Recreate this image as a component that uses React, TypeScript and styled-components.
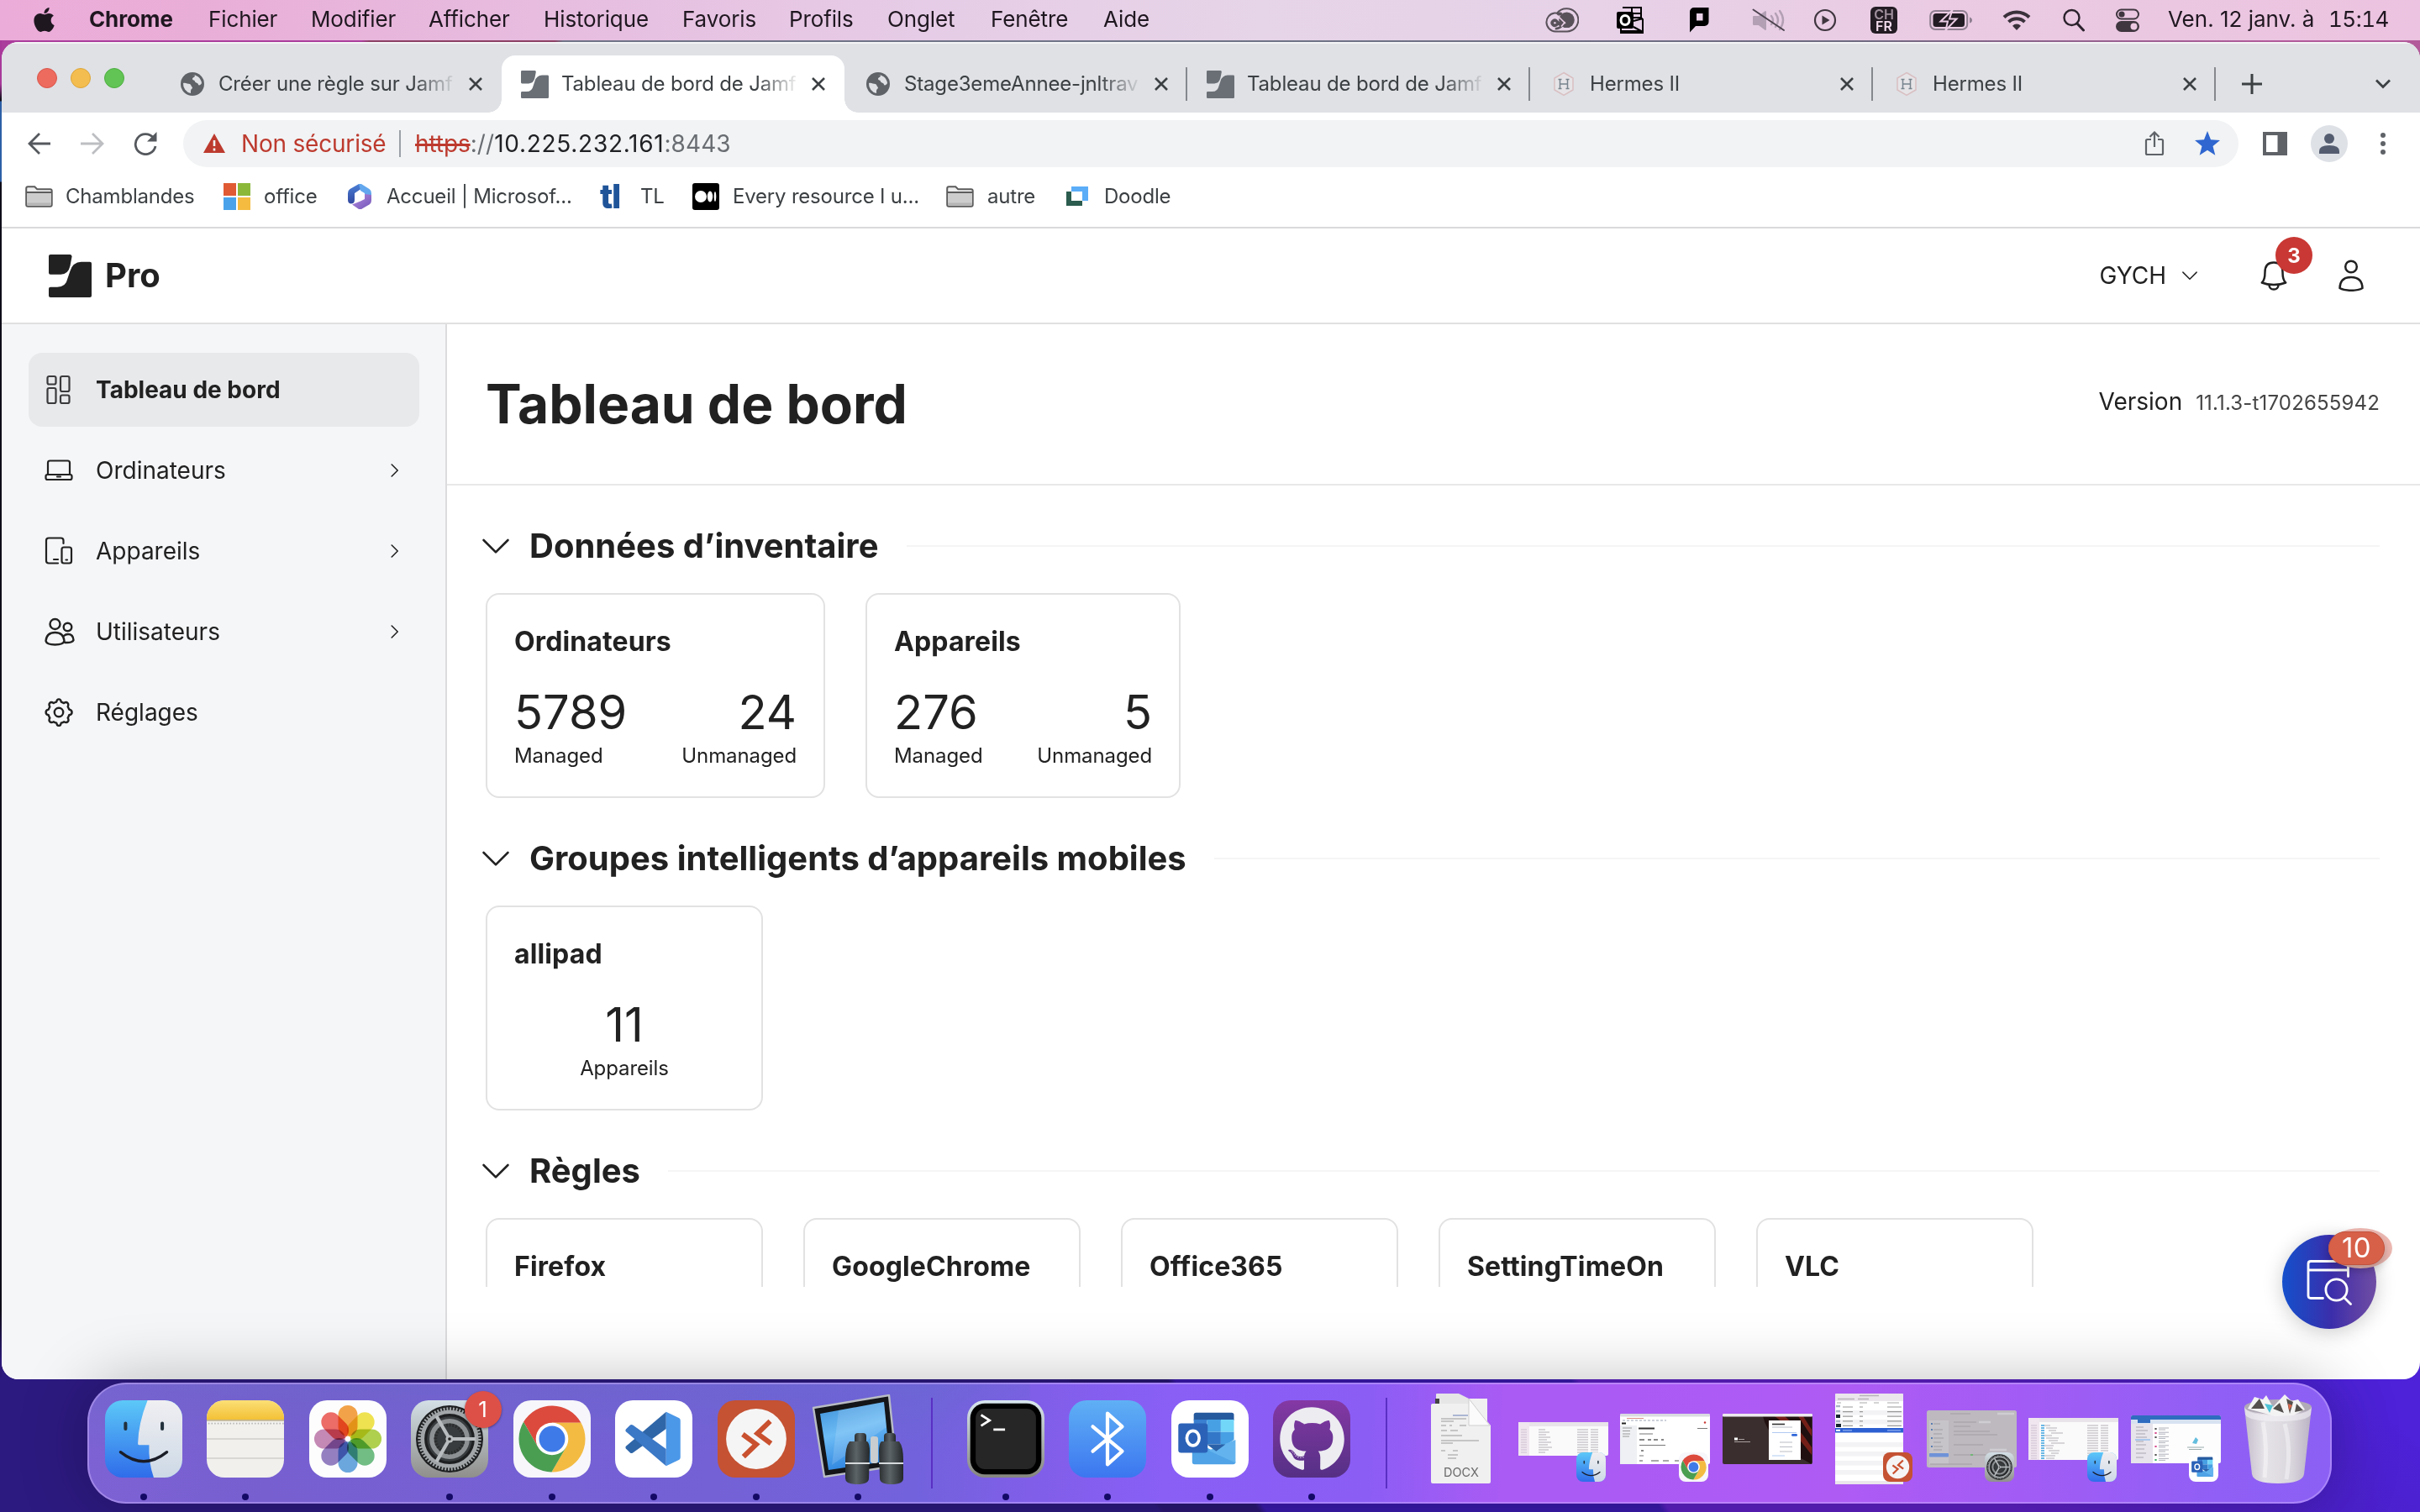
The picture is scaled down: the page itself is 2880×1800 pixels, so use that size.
import React from "react";
import styled, { createGlobalStyle, css } from "styled-components";
import { FaApple, FaGithub } from "react-icons/fa";

const GlobalStyle = createGlobalStyle`
  *, *::before, *::after { box-sizing: border-box; }
  body { margin: 0; background: #24125e; }
  svg { display: block; flex: none; }
`;

const Desktop = styled.div`
  width: 2880px;
  height: 1800px;
  overflow: hidden;
  display: flex;
  flex-direction: column;
  font-family: Inter, "Liberation Sans", sans-serif;
  color: #212121;
  background:
    linear-gradient(180deg, #a8399a 0 100px, #14101c 118px, #14101c 120px, #2c5fa6 121px 216px, #0e0c18 217px 1560px, #2b1778 1620px) 0 0 / 2px 1640px no-repeat,
    linear-gradient(90deg, #ab3d9c 0 430px, #8c3f63 440px 660px, #6f7386 670px 1540px, #6d6a80 2200px, #b25a9a 2700px 2880px) 0 0 / 100% 80px no-repeat,
    linear-gradient(220deg, #4d22d8 0 90px, transparent 260px) 100% 100% / 400px 200px no-repeat,
    linear-gradient(55deg, #2d1a80 0 46%, #2a1774 46.2% 50%, #3a1aae 50.3% 66%, #5d1fc4 66.3% 80%, #4a1fc4 92%) 0 100% / 100% 170px no-repeat,
    #2a1774;
`;

/* ---------- macOS menu bar ---------- */

const MenuBar = styled.header`
  flex: none;
  height: 48px;
  display: flex;
  align-items: center;
  justify-content: space-between;
  font-size: 26px;
  line-height: 32px;
  color: #1f1720;
  background: linear-gradient(90deg, #ecacd9 0, #e9aed8 8%, #e7bcdf 22%, #e6cce6 38%, #e6d4e8 52%, #e7d2e8 66%, #eacbe3 80%, #ecc3e0 100%);
`;

const MenuList = styled.nav`
  display: flex;
  align-items: center;
  padding: 0 0 2px 36px;
  letter-spacing: -0.12px;
`;

const AppleSlot = styled.span`
  width: 70px;
`;

const MenuItem = styled.span<{ $pitch: number; $bold?: boolean }>`
  width: ${(p) => p.$pitch}px;
  white-space: nowrap;
  font-weight: ${(p) => (p.$bold ? 700 : 400)};
`;

const StatusArea = styled.div`
  display: flex;
  align-items: center;
  width: 1060px;
`;

const StatusSlot = styled.span<{ $w: number }>`
  width: ${(p) => p.$w}px;
  display: flex;
  justify-content: center;
`;

const Clock = styled.span`
  display: flex;
  width: 300px;
  padding: 0 0 2px 9px;
  white-space: nowrap;
`;

const ClockDate = styled.span`
  width: 191px;
`;

const ClockTime = styled.span`
  font-variant-numeric: tabular-nums;
  letter-spacing: -0.5px;
`;

const InputSource = styled.span`
  width: 32px;
  height: 32px;
  border-radius: 6px;
  background: #231c24;
  display: flex;
  flex-direction: column;
  align-items: center;
  justify-content: center;
  font-size: 16px;
  line-height: 14px;
  font-weight: 600;
  color: #f2dcee;
`;

const InputCountry = styled.span`
  opacity: 0.6;
`;

/* ---------- browser window ---------- */

const BrowserWindow = styled.main`
  position: relative;
  flex: none;
  margin: 2px 0 0 2px;
  height: 1592px;
  border-radius: 20px;
  overflow: hidden;
  background: #fff;
  display: flex;
  flex-direction: column;
`;

const TabStrip = styled.div`
  flex: none;
  height: 84px;
  display: flex;
  align-items: flex-end;
  background: #dfe1e5;
  border-top: 2px solid #f4f4f6;
`;

const TrafficLights = styled.div`
  width: 187px;
  height: 82px;
  display: flex;
  gap: 16px;
  padding: 29px 0 0 42px;
`;

const Light = styled.span<{ $fill: string; $edge: string }>`
  width: 24px;
  height: 24px;
  border-radius: 50%;
  background: ${(p) => p.$fill};
  border: 1px solid ${(p) => p.$edge};
`;

const activeTab = css`
  background: #fff;
  &::before,
  &::after {
    content: "";
    position: absolute;
    bottom: 0;
    width: 16px;
    height: 16px;
  }
  &::before {
    left: -16px;
    background: radial-gradient(circle at 0 0, transparent 15.5px, #fff 16px);
  }
  &::after {
    right: -16px;
    background: radial-gradient(circle at 100% 0, transparent 15.5px, #fff 16px);
  }
`;

const Tab = styled.div<{ $active?: boolean; $divider?: boolean }>`
  position: relative;
  width: 408px;
  height: 68px;
  display: flex;
  align-items: center;
  padding: 0 22px;
  border-radius: 16px 16px 0 0;
  ${(p) => p.$active && activeTab}
  ${(p) =>
    p.$divider &&
    css`
      background: linear-gradient(#85888d, #85888d) 100% 50% / 2px 40px no-repeat;
    `}
`;

const TabIcon = styled.span`
  width: 35px;
  margin-right: 14px;
  display: flex;
  justify-content: center;
`;

const TabTitle = styled.span`
  width: 284px;
  margin-right: 14px;
  overflow: hidden;
  white-space: nowrap;
  font-size: 24px;
  line-height: 32px;
  letter-spacing: -0.17px;
  color: #3c4043;
  mask-image: linear-gradient(90deg, #000 232px, transparent 284px);
`;

const NewTab = styled.div`
  flex: 1;
  height: 68px;
  display: flex;
  align-items: center;
  justify-content: space-between;
  padding: 0 35px 0 31px;
`;

const Toolbar = styled.div`
  flex: none;
  height: 70px;
  margin-top: 2px;
  display: flex;
  align-items: center;
  padding-left: 27px;
  padding-bottom: 1px;
`;

const NavButtons = styled.div`
  width: 189px;
  display: flex;
  align-items: center;
  gap: 32px;
`;

const Omnibox = styled.div`
  width: 2446px;
  height: 56px;
  border-radius: 28px;
  background: #f1f3f4;
  display: flex;
  align-items: center;
  padding: 0 22px 0 24px;
  font-size: 28px;
  line-height: 36px;
`;

const Insecure = styled.span`
  width: 188px;
  margin-left: 19px;
  color: #bd3a2e;
  letter-spacing: -0.2px;
`;

const OmniDivider = styled.span`
  width: 2px;
  height: 32px;
  margin-right: 17px;
  background: #9aa0a6;
`;

const Address = styled.span`
  flex: 1;
  color: #6a6e73;
  letter-spacing: 0.1px;
`;

const Scheme = styled.span`
  color: #bd3a2e;
  letter-spacing: -0.1px;
  text-decoration: line-through;
  text-decoration-thickness: 3px;
`;

const Host = styled.span`
  color: #202124;
  letter-spacing: 0.72px;
`;

const OmniActions = styled.span`
  display: flex;
  align-items: center;
  gap: 36px;
`;

const ToolbarActions = styled.div`
  display: flex;
  align-items: center;
  padding-left: 29px;
  gap: 28px;
`;

const Avatar = styled.span`
  width: 44px;
  height: 44px;
  border-radius: 50%;
  background: #dee1e6;
  display: flex;
  align-items: center;
  justify-content: center;
`;

const Dots = styled.span`
  display: flex;
  flex-direction: column;
  gap: 4px;
  margin-left: 11px;
  & > i {
    width: 6px;
    height: 6px;
    border-radius: 50%;
    background: #5f6368;
  }
`;

const BookmarkBar = styled.div`
  flex: none;
  height: 66px;
  display: flex;
  align-items: center;
  padding: 0 28px 8px;
  border-bottom: 2px solid #dadadc;
`;

const Bookmark = styled.span<{ $w: number; $icon: number }>`
  width: ${(p) => p.$w}px;
  display: grid;
  grid-template-columns: ${(p) => p.$icon}px 1fr;
  align-items: center;
  font-size: 24px;
  line-height: 32px;
  letter-spacing: -0.2px;
  white-space: nowrap;
  color: #3c4043;
`;

const TlMark = styled.b`
  font-size: 40px;
  line-height: 32px;
  font-weight: 800;
  letter-spacing: -1.5px;
  color: #1f5499;
`;

/* ---------- Jamf Pro page ---------- */

const AppHeader = styled.div`
  flex: none;
  height: 114px;
  display: flex;
  align-items: center;
  padding: 0 67px 0 56px;
  border-bottom: 2px solid #e0e0e0;
`;

const Brand = styled.div`
  flex: 1;
  display: flex;
  align-items: center;
  gap: 16px;
  font-size: 40px;
  line-height: 48px;
  font-weight: 700;
`;

const SiteMenu = styled.div`
  display: flex;
  align-items: center;
  gap: 19px;
  font-size: 28px;
  line-height: 36px;
  margin-right: 75px;
`;

const BellButton = styled.div`
  position: relative;
  margin-right: 61px;
`;

const AlertBadge = styled.span`
  position: absolute;
  left: 18px;
  top: -28px;
  width: 44px;
  height: 44px;
  border-radius: 50%;
  background: #c93834;
  color: #fff;
  font-size: 24px;
  line-height: 46px;
  font-weight: 700;
  text-align: center;
`;

const AppBody = styled.div`
  flex: 1;
  min-height: 0;
  display: flex;
`;

const Sidebar = styled.aside`
  width: 530px;
  flex: none;
  padding: 34px 31px 0 32px;
  display: flex;
  flex-direction: column;
  gap: 8px;
  background: #f5f6f8;
  border-right: 2px solid #dcdcde;
`;

const NavItem = styled.div<{ $active?: boolean }>`
  height: 88px;
  border-radius: 16px;
  display: flex;
  align-items: center;
  padding: 0 24px 0 19px;
  font-size: 28px;
  line-height: 36px;
  font-weight: ${(p) => (p.$active ? 700 : 400)};
  background: ${(p) => (p.$active ? "#e8e9eb" : "transparent")};
`;

const NavIcon = styled.span`
  width: 61px;
`;

const NavLabel = styled.span`
  flex: 1;
`;

const Page = styled.section`
  flex: 1;
  min-width: 0;
  display: flex;
  flex-direction: column;
`;

const PageHeader = styled.div`
  flex: none;
  height: 192px;
  display: flex;
  align-items: center;
  justify-content: space-between;
  padding: 0 48px 0 46px;
  border-bottom: 2px solid #e8e8e8;
`;

const PageTitle = styled.h1`
  margin: 0;
  font-size: 64px;
  line-height: 80px;
  font-weight: 700;
`;

const Version = styled.div`
  display: flex;
  align-items: baseline;
  gap: 16px;
  padding-bottom: 4px;
  font-size: 28px;
  line-height: 36px;
`;

const VersionNumber = styled.span`
  font-size: 24px;
  letter-spacing: 0.16px;
  color: #454545;
`;

const Sections = styled.div`
  height: 954px;
  overflow: hidden;
  padding: 16px 48px 0 46px;
  display: flex;
  flex-direction: column;
  gap: 16px;
`;

const Section = styled.section`
  flex: none;
`;

const SectionHeader = styled.div`
  height: 112px;
  display: flex;
  align-items: center;
  margin-left: -4px;
`;

const SectionTitle = styled.h2`
  margin: 0 33px 0 24px;
  font-size: 40px;
  line-height: 48px;
  font-weight: 700;
  white-space: nowrap;
`;

const Rule = styled.span`
  flex: 1;
  height: 2px;
  background: #f5f5f5;
`;

const CardRow = styled.div`
  display: flex;
  gap: 48px;
`;

const Card = styled.article<{ $w: number }>`
  flex: none;
  width: ${(p) => p.$w}px;
  height: 244px;
  padding: 36px 32px 0;
  border: 2px solid #e2e2e2;
  border-radius: 16px;
`;

const CardTitle = styled.h3`
  margin: 0 0 32px;
  font-size: 32px;
  line-height: 40px;
  font-weight: 700;
  letter-spacing: 0.12px;
`;

const Stats = styled.div<{ $single?: boolean }>`
  display: flex;
  justify-content: ${(p) => (p.$single ? "center" : "space-between")};
`;

const Stat = styled.div<{ $align: "left" | "right" | "center" }>`
  text-align: ${(p) => p.$align};
`;

const StatValue = styled.div`
  font-size: 56px;
  line-height: 64px;
  margin-bottom: 4px;
`;

const StatLabel = styled.div`
  font-size: 24px;
  line-height: 32px;
  letter-spacing: -0.1px;
`;

const Fab = styled.div`
  position: absolute;
  left: 2714px;
  top: 1420px;
  width: 112px;
  height: 112px;
  border-radius: 50%;
  background: linear-gradient(90deg, #1550cc 0, #2b3cb8 32%, #3b2eab 52%, #5a3ea6 78%, #6f4ea4 100%);
  box-shadow: 0 4px 24px rgba(0, 0, 0, 0.2);
`;

const FabIcon = styled.span`
  position: absolute;
  left: 28px;
  top: 28px;
`;

const FabHalo = styled.span`
  position: absolute;
  left: 55px;
  top: -8px;
  width: 76px;
  height: 48px;
  border-radius: 50%;
  background: #eeb9b2;
`;

const FabBadge = styled.span`
  position: absolute;
  left: 55px;
  top: -4px;
  width: 67px;
  height: 40px;
  border-radius: 20px;
  border: 1px solid #c2523c;
  background: #d76049;
  color: #fff;
  font-size: 33px;
  line-height: 37px;
  letter-spacing: 0.5px;
  text-align: center;
  box-shadow: 0 5px 12px rgba(0, 0, 0, 0.25);
`;

/* ---------- dock ---------- */

const Dock = styled.footer`
  position: relative;
  flex: none;
  margin: 4px 105px 0 104px;
  height: 144px;
  border-radius: 46px;
  border: 2px solid rgba(206, 180, 255, 0.45);
  padding: 0 0 0 4px;
  display: flex;
  background:
    linear-gradient(180deg, rgba(90, 110, 190, 0.22), rgba(120, 90, 230, 0) 60%) 0 0 / 42% 100% no-repeat,
    linear-gradient(92deg, #7d62d4 0, #775fd0 8%, #7461d6 28%, #7262dc 37%, #805ee8 42%, #895ff6 48%, #8b5df5 57%, #a95bf4 63%, #ae5bf4 78%, #a25cf5 86%, #905ff5 95%, #8c60f4 100%);
  background-origin: border-box;
  box-shadow: 0 0 80px rgba(0, 0, 0, 0.27);
`;

const DockSlot = styled.div`
  position: relative;
  flex: none;
  width: 121.5px;
  display: flex;
  flex-direction: column;
  align-items: center;
  padding-top: 19px;
`;

const RunningDot = styled.i`
  width: 8px;
  height: 8px;
  border-radius: 50%;
  margin-top: 19px;
  background: #140a66;
`;

const DockDivider = styled.span<{ $w: number }>`
  flex: none;
  width: ${(p) => p.$w}px;
  display: flex;
  justify-content: center;
  padding-top: 16px;
  &::before {
    content: "";
    width: 2px;
    height: 108px;
    background: #5a2fc4;
  }
`;

const DockBadge = styled.span`
  position: absolute;
  left: 78px;
  top: 8px;
  width: 44px;
  height: 44px;
  border-radius: 50%;
  background: #dd5048;
  color: #fff;
  font-size: 26px;
  line-height: 44px;
  text-align: center;
  box-shadow: 0 1px 3px rgba(0, 0, 0, 0.4);
`;

const WindowSlot = styled.div`
  position: relative;
  flex: none;
  width: 121.5px;
  height: 130px;
  display: flex;
  align-items: center;
  justify-content: center;
`;

const MiniBadge = styled.span`
  position: absolute;
  right: 10px;
  top: 81px;
`;

const DocxLabel = styled.text`
  font-family: Inter, sans-serif;
  font-size: 14.5px;
  fill: #6b6b6b;
`;

/* ---------- menu bar drawings ---------- */

const CreativeCloud = () => (
  <svg width="40" height="30" viewBox="0 0 40 30" fill="none" stroke="#5a525b" strokeWidth="2">
    <path d="M25.500 1.200a13.300 13.300 0 0 1 .5 27.200H12a11 11 0 0 1-1-21.900q1.500-.1 3 .2A14 14 0 0 1 25.500 1.200z" />
    <path d="M20 19.500l-4.500-4.700a5 5 0 1 0-3.700 8.400q3 0 5.200-2.400l7-9q1.500-1.800 3.200-1" strokeWidth="0" />
    <circle cx="25.500" cy="14.800" r="9.300" fill="#5a525b" stroke="none" />
    <path d="M19.500 8q-2.500-1.500-5 .9M19.500 22l-6.500-6.200a3 3 0 1 0-.2 5q1.200-.6 2-1.500" strokeWidth="3.600" />
    <path d="M11.800 25.200q4.700 0 8.200-3.700" strokeWidth="2.600" />
    <path stroke="#e9cfe6" d="M14.500 9.500l9.500 9.500M19 22.500q2.500-2.500 4.500-5.500" strokeWidth="1.600" />
  </svg>
);

const OutlookMenu = () => (
  <svg width="32" height="32" viewBox="0 0 32 32">
    <path d="M7 1h22v13l2 1v16H5V20" fill="none" stroke="#000" strokeWidth="2" />
    <path d="M18 1v7h11M18 13h11M20 17l11-3M20 24l11 6M5 29h24" fill="none" stroke="#000" strokeWidth="2" />
    <rect x="0" y="6" width="20" height="20" rx="2" fill="#000" />
    <ellipse cx="10" cy="16" rx="5" ry="5.500" fill="none" stroke="#fff" strokeWidth="3" />
  </svg>
);

const PrintFlag = () => (
  <svg width="23" height="30" viewBox="0 0 23 30">
    <path fillRule="evenodd" d="M5 0h17.500v17a5 5 0 0 1-5 5H7L0 29.500V5a5 5 0 0 1 5-5zM8 7v8.500h7.500V7z" />
  </svg>
);

const MutedVolume = () => (
  <svg width="40" height="28" viewBox="0 0 40 28" fill="none">
    <path d="M2 10h6l8-6v21l-8-6H2z" fill="#b3a0b5" stroke="#b3a0b5" strokeWidth="2" strokeLinejoin="round" />
    <path d="M23 9q4 5 0 10M28 6q6 8 0 16M33 3q8 11 0 22" stroke="#b3a0b5" strokeWidth="2.400" strokeLinecap="round" />
    <path d="M1.500 1.500L38 26" stroke="#4c434e" strokeWidth="2" strokeLinecap="round" />
  </svg>
);

const PlayCircle = () => (
  <svg width="28" height="28" viewBox="0 0 28 28">
    <circle cx="14" cy="14" r="12" fill="none" stroke="#3f363f" strokeWidth="2.200" />
    <path d="M10.500 8.500v11l9-5.500z" fill="#3f363f" />
  </svg>
);

const Battery = () => (
  <svg width="52" height="26" viewBox="0 0 52 26">
    <rect x="1.200" y="2" width="44" height="22" rx="6" fill="none" stroke="#8f7f90" strokeWidth="2" />
    <rect x="4.500" y="5" width="37.500" height="16" rx="3.500" fill="#231c24" />
    <path d="M48 9.500q3 1 3 3.500t-3 3.500z" fill="#8f7f90" />
    <path d="M27.500 1L13.500 14.500h8.500L19.500 25l13-13.500h-8.500z" fill="#231c24" stroke="#ebcde5" strokeWidth="2" />
  </svg>
);

const WifiIcon = () => (
  <svg width="34" height="26" viewBox="0 0 34 26" fill="none" stroke="#3a313b" strokeWidth="4">
    <path d="M2 9.500a21.500 21.500 0 0 1 30 0" />
    <path d="M7.500 15.200a13.500 13.500 0 0 1 19 0" />
    <path d="M17 25l-5-5.300a7 7 0 0 1 10 0z" fill="#3a313b" stroke="none" />
  </svg>
);

const Spotlight = () => (
  <svg width="26" height="28" viewBox="0 0 26 28" fill="none" stroke="#2b222c" strokeLinecap="round">
    <circle cx="10.500" cy="11" r="9" strokeWidth="2.400" />
    <path d="M17 18l7.500 8" strokeWidth="3" />
  </svg>
);

const ControlCenter = () => (
  <svg width="28" height="28" viewBox="0 0 28 28">
    <rect x="1" y="1.500" width="26" height="11" rx="5.500" fill="none" stroke="#3f363f" strokeWidth="2" />
    <circle cx="7" cy="7" r="3.600" fill="#3f363f" />
    <rect x="0" y="15" width="28" height="13" rx="6.500" fill="#3f363f" />
    <circle cx="21.500" cy="21.500" r="4" fill="#ecc9e2" />
  </svg>
);

/* ---------- browser drawings ---------- */

const Globe = () => (
  <svg width="28" height="28" viewBox="0 0 28 28">
    <circle cx="14" cy="14" r="14" fill="#5f6368" />
    <path d="M3 13c3-1 5 1 8 1 2 1 1 3 3 4 0 2-2 2-2 4v3A11.500 11.500 0 0 1 3 13z" fill="#dfe1e5" />
    <path d="M12 3c2 0 4 0 5 1 0 2-3 2-3 4s3 1 3 3 4 1 4 4c1 1 3 0 4-2A11.500 11.500 0 0 0 12 3z" fill="#dfe1e5" />
  </svg>
);

const JamfMark = ({ size, fill }: { size: number; fill: string }) => (
  <svg width={size} height={size} viewBox="0 0 50 50" fill={fill}>
    <path d="M2 0h23q2 0 2 2.500L25 13q-2 10-11 10.300H2q-2 0-2-2V2q0-2 2-2z" />
    <path d="M48 8.500q2 0 2 2V48q0 2-2 2H2q-2 0-2-2v-8q0-2 2-2h8q10 0 12-10l3-9q3-10 13-10.500z" />
  </svg>
);

const HermesMark = () => (
  <svg width="26" height="30" viewBox="0 0 26 30">
    <path d="M13 1.500l11 6.500v14l-11 6.500L2 22V8z" fill="#e6e4e7" stroke="#d9bfc2" strokeWidth="1.500" />
    <path d="M8.500 9.500v11M17.500 9.500v11M8.500 15h9M6.500 9.500h4M15.500 9.500h4M6.500 20.500h4M15.500 20.500h4" stroke="#77838d" strokeWidth="1.500" />
  </svg>
);

const CloseIcon = () => (
  <svg width="16" height="16" viewBox="0 0 16 16" stroke="#3c4043" strokeWidth="2.600">
    <path d="M1 1l14 14M15 1L1 15" />
  </svg>
);

const PlusIcon = () => (
  <svg width="24" height="24" viewBox="0 0 24 24" stroke="#3c4043" strokeWidth="3">
    <path d="M12 0v24M0 12h24" />
  </svg>
);

const TabSearch = () => (
  <svg width="18" height="12" viewBox="0 0 18 12" fill="none" stroke="#3c4043" strokeWidth="2.800">
    <path d="M1 1.500l8 8 8-8" />
  </svg>
);

const ArrowIcon = ({ forward }: { forward?: boolean }) => (
  <svg width="32" height="28" viewBox="0 0 32 28" fill="none" stroke={forward ? "#bcbec1" : "#55595e"} strokeWidth="2.800">
    {forward ? <path d="M3 14h26M17 2l12 12-12 12" /> : <path d="M31 14H6M18 2L6 14l12 12" />}
  </svg>
);

const ReloadIcon = () => (
  <svg width="30" height="28" viewBox="0 0 30 28">
    <path d="M25.500 7A12 12 0 1 0 28 17" fill="none" stroke="#55595e" strokeWidth="2.800" />
    <path d="M29.500 0v11.500H18z" fill="#55595e" />
  </svg>
);

const WarnIcon = () => (
  <svg width="26" height="23" viewBox="0 0 26 23">
    <path d="M13 0l13 23H0z" fill="#bd3a2e" />
    <path d="M13 8v7M13 17.500v3" stroke="#f1f3f4" strokeWidth="2.600" />
  </svg>
);

const ShareIcon = () => (
  <svg width="24" height="30" viewBox="0 0 24 30" fill="none" stroke="#5f6368" strokeWidth="2.200">
    <path d="M8 10H3.500q-1.500 0-1.500 1.500v15Q2 28 3.500 28h17q1.500 0 1.500-1.500v-15q0-1.500-1.500-1.500H16M12 19V2.500M6.500 7L12 1.500 17.500 7" />
  </svg>
);

const StarIcon = () => (
  <svg width="30" height="29" viewBox="0 0 30 29" fill="#2f66d0">
    <path d="M15 0l4 10.200 11 .7-8.500 7 2.800 10.900L15 22.700l-9.300 6.100 2.800-10.900L0 10.900l11-.7z" />
  </svg>
);

const SidePanelIcon = () => (
  <svg width="29" height="28" viewBox="0 0 29 28">
    <path d="M0 0h29v28H0z" fill="#5f6368" />
    <path d="M4 4h13.500v20H4z" fill="#fff" />
  </svg>
);

const ProfileGlyph = () => (
  <svg width="24" height="24" viewBox="0 0 24 24" fill="#545d70">
    <circle cx="12" cy="6" r="6" />
    <path d="M0 24v-3q0-7 12-7t12 7v3z" />
  </svg>
);

const FolderIcon = () => (
  <svg width="33" height="26" viewBox="0 0 33 26">
    <path d="M1.200 3.500q0-2.300 2-2.300h8l3 3h15.500q2 0 2 2v16.500q0 2-2 2H3.200q-2 0-2-2z" fill="#ededed" stroke="#5c5c5c" strokeWidth="2" />
    <path d="M2 9h29v14H2z" fill="#cdcdcd" />
    <path d="M1.200 8h30.500" stroke="#5c5c5c" strokeWidth="2" />
    <path d="M2.200 20.500h28.500v3H2.200z" fill="#b5b5b5" />
  </svg>
);

const MicrosoftMark = () => (
  <svg width="32" height="32" viewBox="0 0 32 32">
    <path d="M0 0h15v15H0z" fill="#e05a33" />
    <path d="M17 0h15v15H17z" fill="#8cb83a" />
    <path d="M0 17h15v15H0z" fill="#4aa3ea" />
    <path d="M17 17h15v15H17z" fill="#f5bb41" />
  </svg>
);

const Microsoft365 = () => (
  <svg width="28" height="30" viewBox="0 0 28 30">
    <defs>
      <linearGradient id="m365a" x1="0" y1="0" x2="0" y2="1">
        <stop offset="0" stopColor="#4a7fd6" />
        <stop offset="1" stopColor="#33489f" />
      </linearGradient>
      <linearGradient id="m365b" x1="0" y1="0" x2="1" y2="1">
        <stop offset="0" stopColor="#b58be0" />
        <stop offset="1" stopColor="#7156b8" />
      </linearGradient>
    </defs>
    <path d="M13 0L2.500 6Q0 7.500 0 11v8q0 4 3.500 4.500Q8 23.500 8 19v-8l9-6q0-5-4-5z" fill="url(#m365a)" />
    <path d="M13 0h3l9.500 6Q28 7.500 28 11v5l-8-2v-3l-5-3z" fill="#63a8ee" />
    <path d="M28 13v6q0 4-2.500 5.500L16 30h-3l-8-5.500 10-4 5-2.500v-6z" fill="url(#m365b)" />
  </svg>
);

const MediumMark = () => (
  <svg width="32" height="32" viewBox="0 0 32 32">
    <rect width="32" height="32" rx="3" />
    <circle cx="10" cy="16" r="7" fill="#fff" />
    <ellipse cx="21" cy="16" rx="3.200" ry="6.500" fill="#fff" />
    <ellipse cx="27" cy="16" rx="1.300" ry="6" fill="#fff" />
  </svg>
);

const DoodleMark = () => (
  <svg width="26" height="24" viewBox="0 0 26 24">
    <path d="M0 6h7v11h12v6H0z" fill="#2b5c4e" />
    <path d="M6 0h20v17h-7V6H6z" fill="#5badf8" />
    <path d="M6 6h13v11H6z" fill="#fff" />
  </svg>
);

/* ---------- page drawings ---------- */

const line = { fill: "none", stroke: "#212121", strokeWidth: 2.2, strokeLinecap: "round", strokeLinejoin: "round" } as const;

const DashboardIcon = () => (
  <svg width="34" height="36" viewBox="0 0 34 36" {...line} stroke="#3a3a3c">
    <rect x="3.500" y="2" width="10" height="9.500" rx="2" />
    <rect x="19" y="2" width="10.500" height="18" rx="2" />
    <rect x="3.500" y="16" width="10" height="18" rx="2" />
    <rect x="19" y="24.500" width="10.500" height="9.500" rx="2" />
  </svg>
);

const LaptopIcon = () => (
  <svg width="34" height="26" viewBox="0 0 34 26" {...line}>
    <path d="M4 18V4q0-2.500 2.500-2.500h21Q30 1.500 30 4v14" />
    <rect x="1.500" y="18" width="31" height="6" rx="2" />
    <path d="M15 20.500h4" />
  </svg>
);

const DevicesIcon = () => (
  <svg width="34" height="34" viewBox="0 0 34 34" {...line}>
    <path d="M16 31.500H5Q2 31.500 2 28.500v-24q0-3 3-3h14.500q3 0 3 3V8M11 27h5" />
    <rect x="20.500" y="12.500" width="11.500" height="19" rx="2.500" />
    <path d="M25.500 27.500h1.500" />
  </svg>
);

const UsersIcon = () => (
  <svg width="36" height="34" viewBox="0 0 36 34" {...line} strokeWidth={2.4}>
    <circle cx="12.500" cy="8" r="6" />
    <circle cx="27.500" cy="11.500" r="4.800" />
    <path d="M1.500 28q1-10 11-10t11 10q-1 4.500-11 4.500T1.500 28zM23 22q2-2 5-2 6 0 6.500 7-1.500 3.500-10 3" />
  </svg>
);

const GearIcon = () => (
  <svg width="34" height="34" viewBox="0 0 34 34" {...line} strokeWidth={2.4}>
    <circle cx="17" cy="17" r="5.200" />
    <path d="M14.200 4.600q.6-3.200 2.800-3.200t2.800 3.200q2 .8 3.200 1.500 2.800-1.900 4.400-.3t.3 4.500q1 1.500 1.500 3.200 3.400.8 3.400 3.500t-3.400 3.300q-.6 1.900-1.500 3.400 1.600 2.900 0 4.500t-4.500.1q-1.400.9-3.400 1.400-.6 3.300-2.800 3.300t-2.800-3.300q-2-.5-3.400-1.400-2.900 1.500-4.500-.1t0-4.500q-.9-1.500-1.500-3.400-3.200-.6-3.200-3.300t3.200-3.500q.6-1.700 1.500-3.200-1.600-2.900 0-4.500t4.500.3q1.400-.9 3.400-1.500z" />
  </svg>
);

const ChevronRight = () => (
  <svg width="10" height="16" viewBox="0 0 10 16" {...line} strokeWidth={1.6}>
    <path d="M1.200 1l7 7-7 7" />
  </svg>
);

const ChevronDown = ({ w }: { w: number }) => (
  <svg width={w} height={w * 0.56} viewBox="0 0 32 18" {...line} strokeWidth={2.6}>
    <path d="M1.500 2L16 16.500 30.500 2" />
  </svg>
);

const BellIcon = () => (
  <svg width="32" height="36" viewBox="0 0 32 36" {...line} strokeWidth={2.5}>
    <path d="M1.800 26.500q3.700-3 3.700-12.500 0-11.500 10.500-11.500T26.500 14q0 9.500 3.700 12.500-6 2.500-14.200 2.500T1.800 26.500z" />
    <path d="M10.500 29.500q.5 5 5.500 5t5.500-5" />
  </svg>
);

const PersonIcon = () => (
  <svg width="30" height="38" viewBox="0 0 30 38" {...line} strokeWidth={2.5}>
    <circle cx="15" cy="8.500" r="6.800" />
    <path d="M1.500 34q.5-13 13.500-13t13.500 13q-5 2.800-13.500 2.800T1.500 34z" />
  </svg>
);

const WindowSearchIcon = () => (
  <svg width="56" height="56" viewBox="0 0 56 56" fill="none" stroke="#fff" strokeWidth="2.800" strokeLinecap="round">
    <path d="M20.500 47.500H6q-3 0-3-3V6.500q0-3 3-3h44.500v18M3 14h47.500" />
    <circle cx="36.500" cy="37.500" r="12.600" />
    <path d="M45.500 46.500l8 8" />
  </svg>
);

/* ---------- dock drawings ---------- */

type Sized = { size?: number };

const FinderIcon = ({ size = 92 }: Sized) => (
  <svg width={size} height={size} viewBox="0 0 100 100">
    <defs>
      <linearGradient id="finderBlue" x1="0" y1="0" x2="0" y2="1">
        <stop offset="0" stopColor="#5cc8f8" />
        <stop offset="1" stopColor="#2f6cea" />
      </linearGradient>
      <linearGradient id="finderWhite" x1="0" y1="0" x2="0" y2="1">
        <stop offset="0" stopColor="#f0eff2" />
        <stop offset="1" stopColor="#cdd9e6" />
      </linearGradient>
      <clipPath id="finderClip">
        <rect width="100" height="100" rx="23" />
      </clipPath>
    </defs>
    <g clipPath="url(#finderClip)">
      <path d="M0 0h100v100H0z" fill="url(#finderBlue)" />
      <path d="M55 0q-12 30-12.500 56 0 2 2 2H57q-1 22 6 42h37V0z" fill="url(#finderWhite)" />
    </g>
    <path d="M26.500 30v7M74 30v7" stroke="#22303c" strokeWidth="4.400" strokeLinecap="round" />
    <path d="M20 67q30 24 60 0" fill="none" stroke="#1a1c26" strokeWidth="3.600" strokeLinecap="round" />
  </svg>
);

const NotesIcon = () => (
  <svg width="92" height="92" viewBox="0 0 100 100">
    <defs>
      <linearGradient id="notesTop" x1="0" y1="0" x2="0" y2="1">
        <stop offset="0" stopColor="#fbdf76" />
        <stop offset="1" stopColor="#f3c136" />
      </linearGradient>
      <clipPath id="notesClip">
        <rect width="100" height="100" rx="23" />
      </clipPath>
    </defs>
    <g clipPath="url(#notesClip)">
      <path d="M0 0h100v100H0z" fill="#f1f0ed" />
      <path d="M0 0h100v25H0z" fill="url(#notesTop)" />
      <path d="M0 26h100" stroke="#c2b48c" strokeWidth="2" />
      <path d="M2 30h98" stroke="#b4b4b4" strokeWidth="2" strokeDasharray="1.600 2.400" />
      <path d="M0 50h100M0 75h100" stroke="#cfcecb" strokeWidth="1.600" />
    </g>
  </svg>
);

const PETALS = ["#f39a35", "#efe13e", "#a9cc3b", "#62b878", "#5c9fdc", "#8a73bd", "#c07dae", "#ec5d57"];

const Petal = styled.rect`
  mix-blend-mode: multiply;
`;

const PhotosIcon = () => (
  <svg width="92" height="92" viewBox="0 0 100 100">
    <rect width="100" height="100" rx="23" fill="#fdfdfd" />
    {PETALS.map((color, i) => (
      <Petal
        key={color}
        x="37.500"
        y="6.500"
        width="25"
        height="40"
        rx="12.500"
        fill={color}
        opacity="0.9"
        transform={`rotate(${i * 45} 50 50)`}
      />
    ))}
  </svg>
);

const SettingsIcon = ({ size = 92 }: Sized) => (
  <svg width={size} height={size} viewBox="0 0 100 100" fill="none">
    <defs>
      <linearGradient id="settingsBg" x1="0" y1="0" x2="0" y2="1">
        <stop offset="0" stopColor="#d3dfe6" />
        <stop offset="1" stopColor="#8f8f8c" />
      </linearGradient>
    </defs>
    <rect width="100" height="100" rx="23" fill="url(#settingsBg)" />
    <circle cx="50" cy="50" r="43.500" fill="#1d1f20" />
    <circle cx="50" cy="50" r="39" stroke="#a2a6a8" strokeWidth="4" strokeDasharray="2.200 1.880" />
    <circle cx="50" cy="50" r="35" stroke="#a2a6a8" strokeWidth="5" />
    <circle cx="50" cy="50" r="29" fill="#393c3e" />
    <circle cx="50" cy="50" r="23" stroke="#8d9193" strokeWidth="6" />
    <circle cx="50" cy="50" r="18" stroke="#2a2c2d" strokeWidth="4" strokeDasharray="2 2" />
    <path d="M50 50h34M50 50L33 20.500M50 50L33 79.500" stroke="#b8bcbe" strokeWidth="4.500" />
    <circle cx="50" cy="50" r="5" fill="#b8bcbe" />
    <circle cx="50" cy="50" r="2" fill="#222" />
  </svg>
);

const ChromeIcon = ({ size = 92 }: Sized) => (
  <svg width={size} height={size} viewBox="0 0 100 100">
    <rect width="100" height="100" rx="23" fill="#f7f6fa" />
    <path d="M13.100 28A43 43 0 0 1 87.500 29H50v21l-18.200 10.500z" fill="#dc4a3d" />
    <path d="M87.500 29A43 43 0 0 1 49.400 93L68.200 60.500 50 50V29z" fill="#f3bb42" />
    <path d="M49.400 93A43 43 0 0 1 13.100 28l18.700 32.500L50 50l18.200 10.500z" fill="#4a9e52" />
    <circle cx="50" cy="50" r="21" fill="#fff" />
    <circle cx="50" cy="50" r="16.800" fill="#3f7be8" />
  </svg>
);

const VSCodeIcon = () => (
  <svg width="92" height="92" viewBox="0 0 100 100">
    <rect width="100" height="100" rx="23" fill="#fff" />
    <path d="M66 15v22L23 68q-2 1.200-3.500 0L14 62.500q-1-1.500 0-3z" fill="#2f66a8" />
    <path d="M66 85V63L23 32q-2-1.200-3.500 0L14 37.500q-1 1.500 0 3z" fill="#3b78c6" />
    <path d="M66 15l17 8q1.500 1 1.500 3v48q0 2-1.500 3l-17 8z" fill="#4b97e8" />
  </svg>
);

const RemoteIcon = ({ size = 92 }: Sized) => (
  <svg width={size} height={size} viewBox="0 0 100 100" fill="none">
    <rect width="100" height="100" rx="23" fill="#c45233" />
    <circle cx="50" cy="50" r="39" fill="#f6f5f5" />
    <path d="M32.500 44L50 57 33.500 73M68 27L51.500 43 69 56" stroke="#c9512f" strokeWidth="6.500" />
  </svg>
);

const ScreenShareIcon = () => (
  <svg width="110" height="108" viewBox="0 0 110 108">
    <defs>
      <linearGradient id="screenBlue" x1="0" y1="0" x2="0.300" y2="1">
        <stop offset="0" stopColor="#3c8fd8" />
        <stop offset="0.500" stopColor="#6dbcf5" />
        <stop offset="1" stopColor="#2f86e0" />
      </linearGradient>
      <linearGradient id="barrel" x1="0" y1="0" x2="1" y2="0">
        <stop offset="0" stopColor="#2a2e30" />
        <stop offset="0.450" stopColor="#5c6468" />
        <stop offset="1" stopColor="#24282a" />
      </linearGradient>
    </defs>
    <path d="M2 16L92 1l9 84-86 13z" fill="#141518" stroke="#b8bcc4" strokeWidth="2.400" strokeLinejoin="round" />
    <path d="M10 23L86 9l7 70-73 11z" fill="url(#screenBlue)" />
    <path d="M32 19L86 9l3 30L24 84z" fill="#fff" opacity="0.140" />
    <rect x="51" y="46" width="14" height="14" rx="4" fill="url(#barrel)" />
    <rect x="86" y="46" width="14" height="14" rx="4" fill="url(#barrel)" />
    <path d="M45 56h21q3 2 3 12l-1 32q0 7-14 7t-14-7V78q0-16 5-22z" fill="url(#barrel)" />
    <path d="M83 56h21q5 6 5 22v22q0 7-14 7t-14-7l-1-32q0-10 3-12z" fill="url(#barrel)" />
    <rect x="70" y="50" width="9" height="32" rx="3" fill="#c9cdcf" />
    <path d="M40 82h29M80 82h29" stroke="#d6dadc" strokeWidth="2" />
  </svg>
);

const TerminalIcon = () => (
  <svg width="92" height="92" viewBox="0 0 100 100">
    <defs>
      <linearGradient id="termRim" x1="0" y1="0" x2="0" y2="1">
        <stop offset="0" stopColor="#d8e6ee" />
        <stop offset="1" stopColor="#85857f" />
      </linearGradient>
    </defs>
    <rect width="100" height="100" rx="23" fill="url(#termRim)" />
    <rect x="4" y="4" width="92" height="92" rx="19" fill="#000" />
    <rect x="11" y="11" width="78" height="78" rx="12" fill="#262626" />
    <path d="M18 19l11 7-11 7M34 38h15" fill="none" stroke="#fff" strokeWidth="3" />
  </svg>
);

const BluetoothIcon = () => (
  <svg width="92" height="92" viewBox="0 0 100 100">
    <defs>
      <linearGradient id="btBg" x1="0" y1="0" x2="0" y2="1">
        <stop offset="0" stopColor="#5fb0f5" />
        <stop offset="1" stopColor="#3c76f0" />
      </linearGradient>
    </defs>
    <rect width="100" height="100" rx="23" fill="url(#btBg)" />
    <path d="M31 34l38 32-19 17V17l19 17-38 32" fill="none" stroke="#fff" strokeWidth="4.600" strokeLinecap="round" strokeLinejoin="round" />
  </svg>
);

const OutlookIcon = ({ size = 92 }: Sized) => (
  <svg width={size} height={size} viewBox="0 0 100 100">
    <rect width="100" height="100" rx="23" fill="#fff" />
    <path d="M29 19q0-3 3-3h46q3 0 3 3v7H29z" fill="#265a9e" />
    <path d="M29 25h17v16H29z" fill="#3a7fd0" />
    <path d="M46 25h18v16H46z" fill="#47a0e4" />
    <path d="M64 25h17v16H64z" fill="#72d6f8" />
    <path d="M29 41h35v16H29z" fill="#3378c8" />
    <path d="M64 41h17v10L64 62z" fill="#47a0e4" />
    <path d="M27 52l56 28q0 3-3 3H30q-3 0-3-3z" fill="#4fa3e6" />
    <path d="M83 51v30L48 65z" fill="#63b4ee" />
    <path d="M46 57h24l-12 9z" fill="#2b62a8" />
    <rect x="9" y="30" width="38" height="38" rx="3.500" fill="#2b62b8" />
    <ellipse cx="28" cy="49" rx="8" ry="9.500" fill="none" stroke="#fff" strokeWidth="4" />
  </svg>
);

const GithubTile = styled.span`
  width: 92px;
  height: 92px;
  border-radius: 21px;
  display: flex;
  align-items: center;
  justify-content: center;
  color: #ececf1;
  background: linear-gradient(180deg, #8438a4, #553085);
`;

const DocxIcon = () => (
  <svg width="72" height="110" viewBox="0 0 72 110">
    <path d="M6 14V2q0-1 1-1h26l12 6v10z" fill="#e6e6e6" />
    <path d="M5 7h5v6H5z" fill="#444" />
    <path d="M2 13h43L45 7h22v27l4 5v67q0 2-2 2H2q-2 0-2-2V15q0-2 2-2z" fill="#f0f0f0" />
    <path d="M45 7l25 32H45z" fill="#fbfbfb" stroke="#cfcfcf" strokeWidth="1" />
    <path d="M26 27h18" stroke="#8d9cc4" strokeWidth="1.400" />
    <path d="M12 31h30M12 34h15M12 39h6M22 39h3M34 39h8M12 45h7M23 45h9M12 51h25M12 57h45M12 60h14M12 69h5M26 69h6M20 74h12M20 78h10" stroke="#9a9a9a" strokeWidth="1.200" />
    <DocxLabel x="36" y="100" textAnchor="middle">DOCX</DocxLabel>
  </svg>
);

const TrashIcon = () => (
  <svg width="84" height="108" viewBox="0 0 84 108">
    <defs>
      <linearGradient id="bin" x1="0" y1="0" x2="1" y2="0">
        <stop offset="0" stopColor="#c3bccb" />
        <stop offset="0.300" stopColor="#e6e3e8" />
        <stop offset="0.700" stopColor="#dad6dd" />
        <stop offset="1" stopColor="#b9b1c3" />
      </linearGradient>
    </defs>
    <path d="M2 16l9 80q2 11 31 11t31-11l9-80z" fill="url(#bin)" />
    <ellipse cx="42" cy="16" rx="40" ry="9" fill="#b0aab6" />
    <path d="M6 18L14 4l10 3 4-5 8 14 14-15 8 8 8-2 8 12-14 7-22 1z" fill="#f3f3f3" />
    <path d="M10 18l10-12 6 12zM36 18l8-7 5 12zM52 6l8 4-4 14zM64 12l8 8-10 2z" fill="#54504e" />
    <path d="M26 12l10 2-4 9z" fill="#4fc3d6" />
    <path d="M54 12l5 2-4 6z" fill="#d8674a" />
    <path d="M2 16q4 10 40 10t40-10l-1 9q-4 8-39 8T3 25z" fill="#f4f2f6" opacity="0.600" />
    <path d="M24 34q6 30 2 66M50 36q8 30 2 66" fill="none" stroke="#fff" strokeWidth="5" opacity="0.400" />
  </svg>
);

const rows = (n: number) => Array.from({ length: n }, (_, i) => i);

const FinderWindow = ({ h, folders }: { h: number; folders?: boolean }) => (
  <svg width="107" height={h} viewBox={`0 0 107 ${h}`}>
    <rect width="107" height={h} rx="2" fill="#fbfafb" />
    <rect width="107" height="5" fill="#e8e4e9" />
    <rect width="13" height={h} fill="#efe6ef" />
    {rows(Math.floor((h - 8) / 3)).map((i) => (
      <g key={i}>
        <path d={`M3 ${9 + i * 3}h7`} stroke="#cdbfd0" strokeWidth="1" />
        <path d={`M${folders ? 18 + (i % 4) * 3 : 24} ${9 + i * 3}h${8 + ((i * 5) % 9)}M70 ${9 + i * 3}h13M86 ${9 + i * 3}h9`} stroke="#b3b0b5" strokeWidth="1.100" />
        {folders && <path d={`M15 ${9 + i * 3}h4`} stroke="#6ab8e6" strokeWidth="2" />}
      </g>
    ))}
  </svg>
);

const BrowserThumb = () => (
  <svg width="107" height="60" viewBox="0 0 107 60">
    <rect width="107" height="60" rx="2" fill="#fff" />
    <rect width="107" height="3.500" rx="1.500" fill="#d9dbe0" />
    <path d="M8 5.500h20" stroke="#d98e86" />
    <path d="M3 8h52" stroke="#9aa3b5" strokeDasharray="3 2" />
    <path d="M2 11.500h5" stroke="#222" strokeWidth="2" />
    <circle cx="101" cy="10.500" r="1.200" fill="#c93834" />
    <path d="M0 14h20v46H0z" fill="#eef0f3" />
    <path d="M3 17h11M3 20.500h9M3 24h9M3 27h8" stroke="#9a9a9a" strokeWidth="1.200" />
    <path d="M22 17.500h19" stroke="#333" strokeWidth="2" />
    <path d="M92 17.500h12M23 24h16M23 37.500h31M23 50h5" stroke="#777" strokeWidth="1.200" />
    <path d="M23 31h6M33 31h4M40 31h5M49 31h3M25 44h3" stroke="#888" strokeWidth="2" />
    <path d="M23 56h4M37 56h9M51 56h7M65 56h8" stroke="#555" strokeWidth="1.200" />
  </svg>
);

const LoginThumb = () => (
  <svg width="107" height="60" viewBox="0 0 107 60">
    <rect width="107" height="60" rx="2" fill="#3b2e2e" />
    <path d="M48 3q6 30 58 57V3z" fill="#20100f" />
    <path d="M62 3q20 14 44 46V40Q92 18 74 3zM90 3l16 24v-8L96 3z" fill="#742018" />
    <rect width="107" height="3.500" rx="1" fill="#eee9f0" />
    <path d="M14 30h4" stroke="#fff" strokeWidth="3" />
    <path d="M19 30.500h7M14 33.500h19" stroke="#a9a0a0" strokeWidth="1" />
    <rect x="55" y="8" width="38" height="47" fill="#fff" />
    <path d="M59 12.500h15" stroke="#333" strokeWidth="1.600" />
    <path d="M59 16h24M68 34h15M68 39.500h15M68 45h15" stroke="#b9bcc4" strokeWidth="1" />
    <path d="M59 22.500h29M59 50h15" stroke="#9dbdee" strokeWidth="0.800" />
    <rect x="82" y="24" width="7" height="2.800" rx="1.400" fill="#2f66d8" />
  </svg>
);

const RemoteListThumb = () => (
  <svg width="81" height="108" viewBox="0 0 81 108">
    <rect width="81" height="108" rx="2" fill="#fff" />
    <path d="M0 1q0-1 1-1h79q1 0 1 1v8H0z" fill="#ebe6ec" />
    <path d="M29 2.500h23M3 6.500h20M27 6.500h13" stroke="#b7b1b9" strokeWidth="1.400" />
    <path d="M0 20h81v5.600H0zM0 31h81v5.600H0zM0 58h81v5.600H0zM0 69h81v5.600H0zM0 80h81v5.600H0zM0 91h81v5.600H0z" fill="#f3f2f4" />
    <path d="M2 11h5M29 11h9M46 11h6M62 11h14" stroke="#aaa" strokeWidth="1.100" />
    {rows(5).map((i) => (
      <path key={i} d={`M9 ${16 + i * 5.6}h12M29 ${16 + i * 5.6}h4M62 ${16 + i * 5.6}h17`} stroke="#999" strokeWidth="1.200" />
    ))}
    <path d="M1 15h5M1 21h5M1 33h5" stroke="#aab6c6" strokeWidth="2.600" />
    <path d="M1 27h5M1 38h6" stroke="#16242f" strokeWidth="4" />
    <path d="M0 41h81v5.500H0z" fill="#2c5fd2" />
    <path d="M1 43.800h5" stroke="#fff" strokeWidth="2" />
    <path d="M9 43.800h11M62 43.800h16" stroke="#8fb0f0" strokeWidth="1.200" />
    <path d="M0 104h81v4H0z" fill="#ebe6ec" />
  </svg>
);

const PrefsThumb = () => (
  <svg width="107" height="68" viewBox="0 0 107 68">
    <rect width="107" height="68" rx="2.500" fill="#bdb9bf" />
    <path d="M3 12h23v52H3z" fill="#c7c4c9" />
    <path d="M28 4h24M8 16h8M8 23h11M8 28h10M8 33h12M8 38h9M8 43h11M8 47h10M32 14h27M32 19h20M32 25h43M32 29h52M32 41h35M32 53h50M4 64h50" stroke="#a19da4" strokeWidth="1.200" />
    <path d="M62 14h14M75 47h20M84 4h20" stroke="#d0cdd2" strokeWidth="2.400" />
    <path d="M5 16h2M5 23h2M5 33h2M5 43h2" stroke="#5a7fb2" strokeWidth="2" />
    <rect x="3" y="51" width="23" height="4.500" rx="1" fill="#6e92d8" />
    <path d="M52 53h3" stroke="#62b868" strokeWidth="1.600" />
  </svg>
);

const MailThumb = () => (
  <svg width="107" height="57" viewBox="0 0 107 57">
    <rect width="107" height="57" rx="2" fill="#fdfdfe" />
    <path d="M0 2q0-2 2-2h103q2 0 2 2v3H0z" fill="#2f6cc0" />
    <path d="M0 5h107v5H0z" fill="#d7e2f1" />
    <path d="M8 7h15" stroke="#2f6cc0" strokeWidth="4" />
    <path d="M0 10h26v47H0z" fill="#e7e4ec" />
    <path d="M6 14h9M6 18h14M6 22h11M6 26h13M6 31h9M6 35h12M6 40h10M6 45h12M6 50h9" stroke="#a9a6b0" strokeWidth="1" />
    <path d="M5 29h18" stroke="#aac8ec" strokeWidth="2" />
    {rows(8).map((i) => (
      <path key={i} d={`M33 ${15 + i * 5.2}h12M33 ${17 + i * 5.2}h8`} stroke="#a9abb5" strokeWidth="0.900" />
    ))}
    <path d="M29.500 15v2M29.500 25v2M29.500 46v2" stroke="#555" strokeWidth="2.200" />
    <path d="M29.500 20v2M29.500 36v2" stroke="#d64a8c" strokeWidth="2.200" />
    <path d="M29.500 52v2" stroke="#3fae6a" strokeWidth="2.200" />
    <path d="M73 33l4-7 3 3-2 5z" fill="#63bede" />
    <path d="M67 38h20M69 40.500h15" stroke="#9aa" strokeWidth="1" />
  </svg>
);

/* ---------- data ---------- */

const menus: [string, number][] = [
  ["Chrome", 142],
  ["Fichier", 122],
  ["Modifier", 140],
  ["Afficher", 137],
  ["Historique", 165],
  ["Favoris", 127],
  ["Profils", 117],
  ["Onglet", 123],
  ["Fenêtre", 134],
  ["Aide", 60],
];

const tabs = [
  { title: "Créer une règle sur Jamf", icon: <Globe /> },
  { title: "Tableau de bord de Jamf", icon: <JamfMark size={33} fill="#6a6f76" />, active: true },
  { title: "Stage3emeAnnee-jnltrav", icon: <Globe />, divider: true },
  { title: "Tableau de bord de Jamf", icon: <JamfMark size={33} fill="#6a6f76" />, divider: true },
  { title: "Hermes II", icon: <HermesMark />, divider: true },
  { title: "Hermes II", icon: <HermesMark />, divider: true },
];

const bookmarks = [
  { label: "Chamblandes", w: 236, iconW: 48, icon: <FolderIcon /> },
  { label: "office", w: 148, iconW: 48, icon: <MicrosoftMark /> },
  { label: "Accueil | Microsof...", w: 300, iconW: 46, icon: <Microsoft365 /> },
  { label: "TL", w: 110, iconW: 48, icon: <TlMark>tl</TlMark> },
  { label: "Every resource I u...", w: 302, iconW: 48, icon: <MediumMark /> },
  { label: "autre", w: 143, iconW: 49, icon: <FolderIcon /> },
  { label: "Doodle", w: 140, iconW: 45, icon: <DoodleMark /> },
];

const navItems = [
  { label: "Tableau de bord", icon: <DashboardIcon />, active: true },
  { label: "Ordinateurs", icon: <LaptopIcon />, more: true },
  { label: "Appareils", icon: <DevicesIcon />, more: true },
  { label: "Utilisateurs", icon: <UsersIcon />, more: true },
  { label: "Réglages", icon: <GearIcon /> },
];

type CardData = { title: string; w: number; stats: [string, string][] };

const sections: { title: string; cards: CardData[] }[] = [
  {
    title: "Données d’inventaire",
    cards: [
      { title: "Ordinateurs", w: 404, stats: [["5789", "Managed"], ["24", "Unmanaged"]] },
      { title: "Appareils", w: 375, stats: [["276", "Managed"], ["5", "Unmanaged"]] },
    ],
  },
  {
    title: "Groupes intelligents d’appareils mobiles",
    cards: [{ title: "allipad", w: 330, stats: [["11", "Appareils"]] }],
  },
  {
    title: "Règles",
    cards: ["Firefox", "GoogleChrome", "Office365", "SettingTimeOn", "VLC"].map((title) => ({ title, w: 330, stats: [] })),
  },
];

const statAlign = (index: number, count: number) => (count === 1 ? "center" : index === 0 ? "left" : "right");

const apps = [
  { name: "finder", icon: <FinderIcon />, running: true },
  { name: "notes", icon: <NotesIcon />, running: true },
  { name: "photos", icon: <PhotosIcon /> },
  { name: "settings", icon: <SettingsIcon />, running: true, badge: "1" },
  { name: "chrome", icon: <ChromeIcon />, running: true },
  { name: "vscode", icon: <VSCodeIcon />, running: true },
  { name: "remote", icon: <RemoteIcon />, running: true },
];

const recentApps = [
  { name: "terminal", icon: <TerminalIcon /> },
  { name: "bluetooth", icon: <BluetoothIcon /> },
  { name: "outlook", icon: <OutlookIcon /> },
  { name: "github", icon: <GithubTile><FaGithub size={79} /></GithubTile> },
];

const ScreenShareSlot = styled(DockSlot)`
  padding-top: 12px;
  & > i {
    margin-top: 10px;
  }
`;

const windows = [
  { name: "finder-a", view: <FinderWindow h={40} />, badge: <FinderIcon size={35} /> },
  { name: "browser", view: <BrowserThumb />, badge: <ChromeIcon size={35} /> },
  { name: "login", view: <LoginThumb /> },
  { name: "remote", view: <RemoteListThumb />, badge: <RemoteIcon size={35} /> },
  { name: "prefs", view: <PrefsThumb />, badge: <SettingsIcon size={35} /> },
  { name: "finder-b", view: <FinderWindow h={50} folders />, badge: <FinderIcon size={35} /> },
  { name: "mail", view: <MailThumb />, badge: <OutlookIcon size={35} /> },
];

export default function App() {
  return (
    <Desktop>
      <GlobalStyle />
      <MenuBar>
        <MenuList>
          <AppleSlot>
            <FaApple size={33} />
          </AppleSlot>
          {menus.map(([label, pitch], i) => (
            <MenuItem key={label} $pitch={pitch} $bold={i === 0}>
              {label}
            </MenuItem>
          ))}
        </MenuList>
        <StatusArea>
          <StatusSlot $w={78}><CreativeCloud /></StatusSlot>
          <StatusSlot $w={83}><OutlookMenu /></StatusSlot>
          <StatusSlot $w={83}><PrintFlag /></StatusSlot>
          <StatusSlot $w={81}><MutedVolume /></StatusSlot>
          <StatusSlot $w={54}><PlayCircle /></StatusSlot>
          <StatusSlot $w={86}>
            <InputSource>
              <InputCountry>CH</InputCountry>
              <span>FR</span>
            </InputSource>
          </StatusSlot>
          <StatusSlot $w={73}><Battery /></StatusSlot>
          <StatusSlot $w={84}><WifiIcon /></StatusSlot>
          <StatusSlot $w={51}><Spotlight /></StatusSlot>
          <StatusSlot $w={78}><ControlCenter /></StatusSlot>
          <Clock>
            <ClockDate>Ven. 12 janv. à</ClockDate>
            <ClockTime>15:14</ClockTime>
          </Clock>
        </StatusArea>
      </MenuBar>

      <BrowserWindow>
        <TabStrip>
          <TrafficLights>
            <Light $fill="#ed6a5e" $edge="#d9574c" />
            <Light $fill="#f4bd4f" $edge="#dca63b" />
            <Light $fill="#61c454" $edge="#4fae42" />
          </TrafficLights>
          {tabs.map((tab, i) => (
            <Tab key={i} $active={tab.active} $divider={tab.divider}>
              <TabIcon>{tab.icon}</TabIcon>
              <TabTitle>{tab.title}</TabTitle>
              <CloseIcon />
            </Tab>
          ))}
          <NewTab>
            <PlusIcon />
            <TabSearch />
          </NewTab>
        </TabStrip>

        <Toolbar>
          <NavButtons>
            <ArrowIcon />
            <ArrowIcon forward />
            <ReloadIcon />
          </NavButtons>
          <Omnibox>
            <WarnIcon />
            <Insecure>Non sécurisé</Insecure>
            <OmniDivider />
            <Address>
              <Scheme>https</Scheme>://<Host>10.225.232.161</Host>:8443
            </Address>
            <OmniActions>
              <ShareIcon />
              <StarIcon />
            </OmniActions>
          </Omnibox>
          <ToolbarActions>
            <SidePanelIcon />
            <Avatar>
              <ProfileGlyph />
            </Avatar>
            <Dots>
              <i />
              <i />
              <i />
            </Dots>
          </ToolbarActions>
        </Toolbar>

        <BookmarkBar>
          {bookmarks.map((b) => (
            <Bookmark key={b.label} $w={b.w} $icon={b.iconW}>
              {b.icon}
              <span>{b.label}</span>
            </Bookmark>
          ))}
        </BookmarkBar>

        <AppHeader>
          <Brand>
            <JamfMark size={51} fill="#212121" />
            <span>Pro</span>
          </Brand>
          <SiteMenu>
            <span>GYCH</span>
            <ChevronDown w={18} />
          </SiteMenu>
          <BellButton>
            <BellIcon />
            <AlertBadge>3</AlertBadge>
          </BellButton>
          <PersonIcon />
        </AppHeader>

        <AppBody>
          <Sidebar>
            {navItems.map((item) => (
              <NavItem key={item.label} $active={item.active}>
                <NavIcon>{item.icon}</NavIcon>
                <NavLabel>{item.label}</NavLabel>
                {item.more && <ChevronRight />}
              </NavItem>
            ))}
          </Sidebar>
          <Page>
            <PageHeader>
              <PageTitle>Tableau de bord</PageTitle>
              <Version>
                <span>Version</span>
                <VersionNumber>11.1.3-t1702655942</VersionNumber>
              </Version>
            </PageHeader>
            <Sections>
              {sections.map((section) => (
                <Section key={section.title}>
                  <SectionHeader>
                    <ChevronDown w={32} />
                    <SectionTitle>{section.title}</SectionTitle>
                    <Rule />
                  </SectionHeader>
                  <CardRow>
                    {section.cards.map((card) => (
                      <Card key={card.title} $w={card.w}>
                        <CardTitle>{card.title}</CardTitle>
                        <Stats $single={card.stats.length === 1}>
                          {card.stats.map(([value, label], i) => (
                            <Stat key={label} $align={statAlign(i, card.stats.length)}>
                              <StatValue>{value}</StatValue>
                              <StatLabel>{label}</StatLabel>
                            </Stat>
                          ))}
                        </Stats>
                      </Card>
                    ))}
                  </CardRow>
                </Section>
              ))}
            </Sections>
          </Page>
        </AppBody>

        <Fab>
          <FabIcon>
            <WindowSearchIcon />
          </FabIcon>
          <FabHalo />
          <FabBadge>10</FabBadge>
        </Fab>
      </BrowserWindow>

      <Dock>
        {apps.map((app) => (
          <DockSlot key={app.name}>
            {app.icon}
            {app.running && <RunningDot />}
            {app.badge && <DockBadge>{app.badge}</DockBadge>}
          </DockSlot>
        ))}
        <ScreenShareSlot>
          <ScreenShareIcon />
          <RunningDot />
        </ScreenShareSlot>
        <DockDivider $w={54} />
        {recentApps.map((app) => (
          <DockSlot key={app.name}>
            {app.icon}
            <RunningDot />
          </DockSlot>
        ))}
        <DockDivider $w={56} />
        <WindowSlot>
          <DocxIcon />
        </WindowSlot>
        {windows.map((w) => (
          <WindowSlot key={w.name}>
            {w.view}
            {w.badge && <MiniBadge>{w.badge}</MiniBadge>}
          </WindowSlot>
        ))}
        <WindowSlot>
          <TrashIcon />
        </WindowSlot>
      </Dock>
    </Desktop>
  );
}
